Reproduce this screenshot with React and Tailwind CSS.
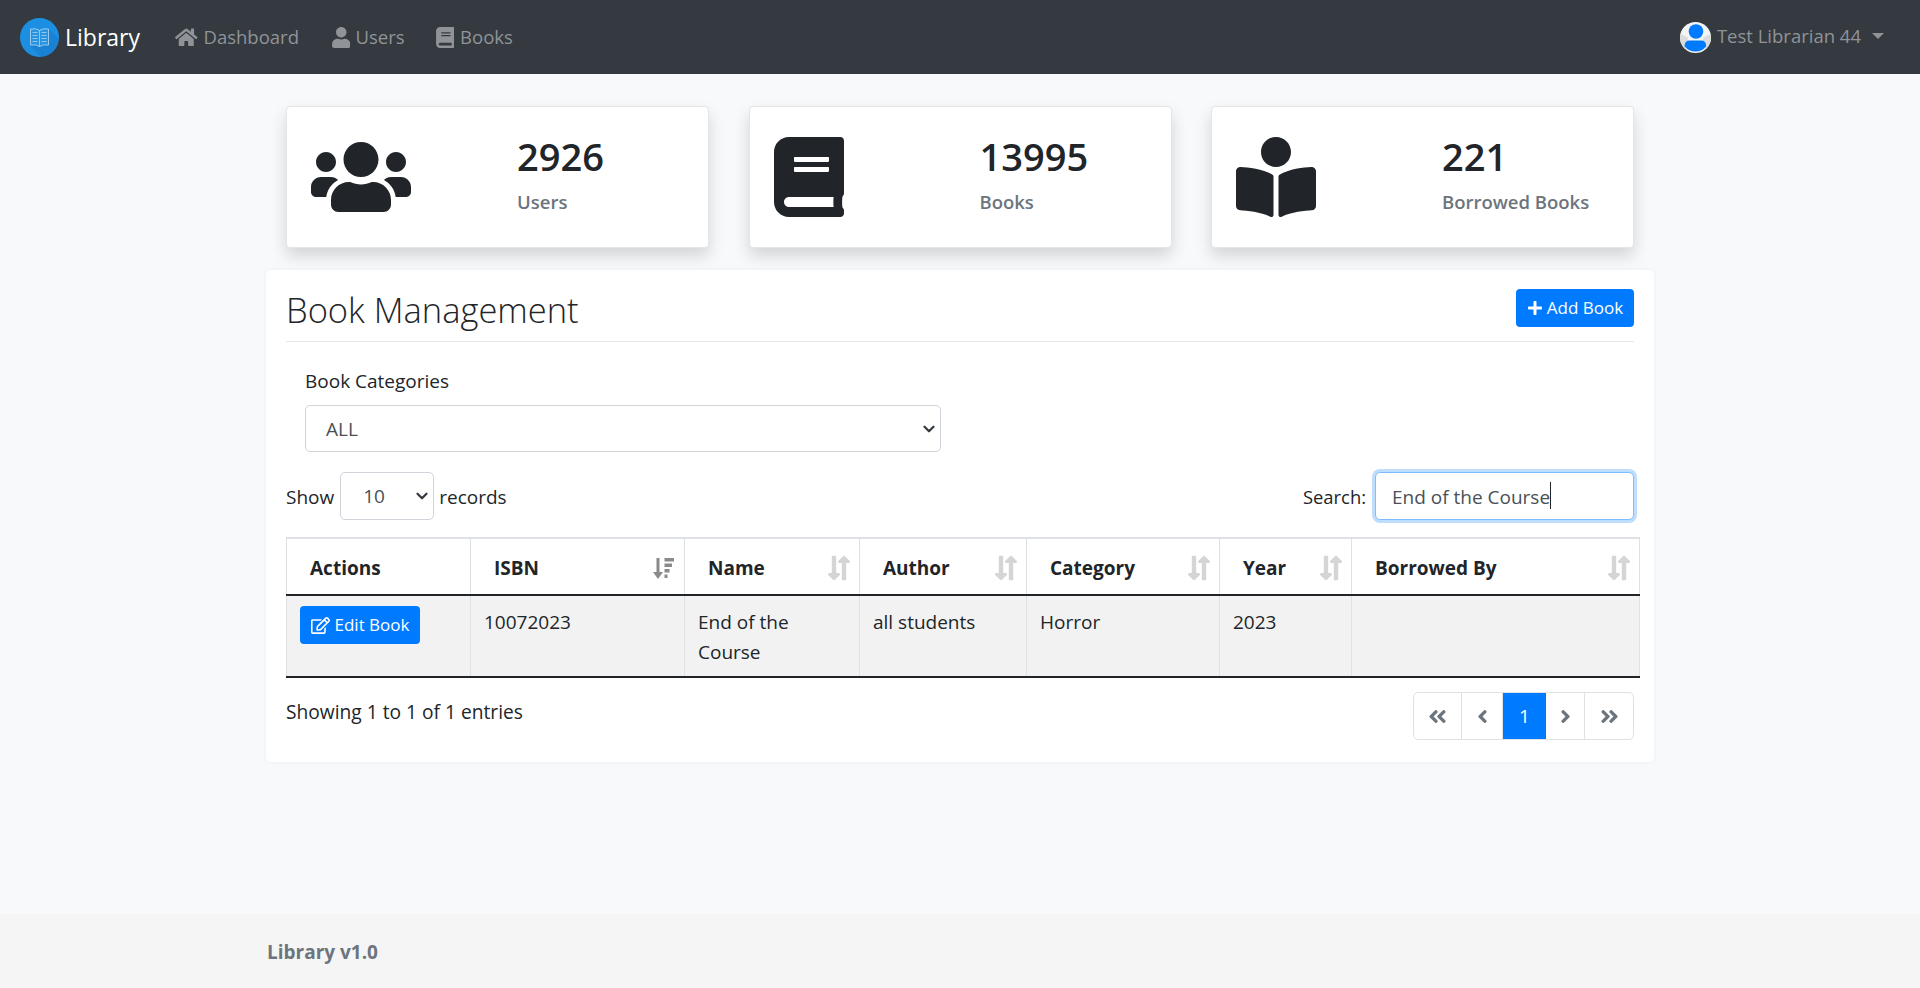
import React from 'react';
import {
    FaHome, FaUser, FaBook, FaUsers, FaBookReader, FaPlus, FaRegEdit,
    FaLongArrowAltDown, FaLongArrowAltUp, FaAngleDoubleLeft, FaAngleLeft, FaAngleRight, FaAngleDoubleRight,
} from 'react-icons/fa';
import { ChevronDown } from 'lucide-react';

const font = { fontFamily: '"Open Sans", "Noto Sans", sans-serif' };

const LogoMark = () => (
    <svg width="39" height="39" viewBox="0 0 39 39">
        <defs>
            <clipPath id="logo-clip"><circle cx="19.5" cy="19.5" r="19.5" /></clipPath>
        </defs>
        <circle cx="19.5" cy="19.5" r="19.5" fill="#1c8fe3" />
        <g clipPath="url(#logo-clip)">
            <path d="M10 28 L29 11 L40 22 L40 40 L22 40 Z" fill="#1673c0" opacity="0.45" />
        </g>
        <path d="M10.5 11 Q16 10 19.5 12.5 Q23 10 28.5 11 V27 Q23 26 19.5 28.5 Q16 26 10.5 27 Z" fill="#2a93e0" stroke="#a6d4f3" strokeWidth="0.9" />
        <path d="M19.5 12.5 V28.5 M12.5 14.5 H17.5 M12.5 17.5 H17.5 M12.5 20.5 H17.5 M12.5 23.5 H17.5 M21.5 14.5 H26.5 M21.5 17.5 H26.5 M21.5 20.5 H26.5 M21.5 23.5 H26.5" stroke="#a6d4f3" strokeWidth="0.8" fill="none" />
    </svg>
);

const AvatarMark = () => (
    <svg width="31" height="31" viewBox="0 0 32 32">
        <defs>
            <clipPath id="avatar-clip"><circle cx="16" cy="16" r="16" /></clipPath>
        </defs>
        <circle cx="16" cy="16" r="16" fill="#f4f4f4" />
        <path d="M0 12 L8 16 L8 24 L4 30 L0 30 Z M32 12 L24 16 L24 24 L28 30 L32 30 Z" fill="#dcdcdc" clipPath="url(#avatar-clip)" />
        <circle cx="16.5" cy="9.8" r="7.5" fill="#007bff" />
        <path d="M4.7 25 Q4.7 19 10 19 H22 Q27 19 27 25 Q23 30.5 16 30.5 Q9 30.5 4.7 25 Z" fill="#007bff" />
    </svg>
);

// thicker than the FA glyph, bars get shorter going down
const SortAmountIcon = () => (
    <svg width="21" height="21" viewBox="0 0 21 21" fill="#8a8a8a">
        <path d="M3.5 0 H6.5 V14 H10 L5 21 L0 14 H3.5 Z" />
        <path d="M11.5 0 H21 V3.5 H11.5 Z M11.5 5.5 H19 V9 H11.5 Z M11.5 11 H16.5 V14.5 H11.5 Z M11.5 16.5 H14.5 V20 H11.5 Z" />
    </svg>
);

const NavItem = ({ icon: Icon, label, iconSize, iconClass, className }) => (
    <a className={`flex items-center text-[#909397] ${className}`}>
        <Icon size={iconSize} className={iconClass} />
        <span>{label}</span>
    </a>
);

const StatCard = ({ icon: Icon, iconSize, iconClass, value, label }) => (
    <div className="w-[423px] h-[142px] bg-white border border-[#e3e5e7] rounded-[4px] shadow-[0_8px_16px_rgba(0,0,0,0.15)] flex items-center">
        <div className="w-[230px] pl-[24px] shrink-0 text-[#212529]">
            <Icon size={iconSize} className={iconClass} />
        </div>
        <div className="-mt-[8px]">
            <p className="text-[38px] font-semibold text-[#212529] leading-[48px]">{value}</p>
            <p className="text-[18.5px] font-semibold text-[#6c757d] leading-[27px] mt-[8px]">{label}</p>
        </div>
    </div>
);

const SortIcon = ({ active }) => active ? (
    <SortAmountIcon />
) : (
    <span className="flex items-center h-[21px] -mr-[2px] text-[#d5d5d5]">
        <FaLongArrowAltDown size={28} className="w-[14px]" />
        <FaLongArrowAltUp size={28} className="w-[14px] -ml-[4px]" />
    </span>
);

const columns = [
    { label: 'Actions', width: 'w-[184px]', noSort: true },
    { label: 'ISBN', width: 'w-[214px]', active: true },
    { label: 'Name', width: 'w-[175px]' },
    { label: 'Author', width: 'w-[167px]' },
    { label: 'Category', width: 'w-[193px]' },
    { label: 'Year', width: 'w-[132px]' },
    { label: 'Borrowed By', width: 'w-[288px]' },
];

const pageButtons = [
    { icon: FaAngleDoubleLeft, width: 'w-[48px]' },
    { icon: FaAngleLeft, width: 'w-[41px]' },
    { text: '1', width: 'w-[43px]' },
    { icon: FaAngleRight, width: 'w-[39px]' },
    { icon: FaAngleDoubleRight, width: 'w-[48px]' },
];

const tdClass = "border-r border-[#dee2e6] align-top pt-[11px] px-[13px]";

export default function App() {
    return (
        <div style={font} className="min-h-screen flex flex-col bg-[#f8f9fa] text-[19px] text-[#212529]">
            <nav className="h-[74px] bg-[#343a40] flex items-center justify-between pl-[20px] pr-[36px] text-[18.5px]">
                <div className="flex items-center">
                    <div className="flex items-center gap-[6px] text-white text-[23px] w-[155px]">
                        <LogoMark />
                        <span>Library</span>
                    </div>
                    <div className="flex items-center">
                        <NavItem icon={FaHome} iconSize={22.5} className="gap-[6px]" label="Dashboard" />
                        <NavItem icon={FaUser} iconSize={21} iconClass="w-[18.5px]" className="gap-[5px] ml-[33px]" label="Users" />
                        <NavItem icon={FaBook} iconSize={21} iconClass="w-[18.5px]" className="gap-[6px] ml-[31px]" label="Books" />
                    </div>
                </div>
                <div className="flex items-center text-[#909397]">
                    <AvatarMark />
                    <span className="ml-[6px] -mt-[2px]">Test Librarian 44</span>
                    <span className="ml-[11px] -mt-[2px] border-x-[6px] border-x-transparent border-t-[6px] border-t-[#909397]"></span>
                </div>
            </nav>

            <main className="flex-1 flex flex-col items-center pt-[32px]">
                <div className="flex gap-[39.5px] w-[1348px]">
                    <StatCard icon={FaUsers} iconSize={100} value="2926" label="Users" />
                    <StatCard icon={FaBook} iconSize={80} iconClass="w-[70px]" value="13995" label="Books" />
                    <StatCard icon={FaBookReader} iconSize={80} value="221" label="Borrowed Books" />
                </div>

                <section className="w-[1388px] h-[492px] mt-[22px] bg-white rounded-[5px] shadow-[0_0_4px_rgba(0,0,0,0.05)] px-[20px] pt-[19px]">
                    <div className="flex items-center justify-between h-[53px] border-b border-[#e5e7e9]">
                        <h2 className="text-[34.5px] font-light leading-[44px] -mt-[10px]">Book Management</h2>
                        <button className="h-[38px] w-[118px] -mt-[15px] bg-[#007bff] text-white rounded-[4px] flex items-center justify-center gap-[4px] text-[17px]">
                            <FaPlus size={16} />
                            Add Book
                        </button>
                    </div>

                    <div className="ml-[19px] w-[636px] mt-[26px]">
                        <label className="block leading-[27px]">Book Categories</label>
                        <div className="relative mt-[10px]">
                            <select className="w-full h-[47px] appearance-none bg-white border border-[#ced4da] rounded-[5px] pl-[20px] pt-[2px] text-[#495057]">
                                <option>ALL</option>
                            </select>
                            <ChevronDown size={18} strokeWidth={3} className="absolute right-[3px] top-[15px] text-[#343a40]" />
                        </div>
                    </div>

                    <div className="flex items-center justify-between mt-[20px] h-[48px]">
                        <div className="flex items-center">
                            <span className="pt-[2px]">Show</span>
                            <div className="relative ml-[6px] mr-[5px]">
                                <select className="w-[94px] h-[48px] appearance-none bg-white border border-[#ced4da] rounded-[5px] pl-[22px] text-[#495057]">
                                    <option>10</option>
                                </select>
                                <ChevronDown size={18} strokeWidth={3} className="absolute right-[3px] top-[15px] text-[#343a40]" />
                            </div>
                            <span className="pt-[2px]">records</span>
                        </div>
                        <div className="flex items-center gap-[9px]">
                            <label className="text-[18.4px] pt-[2px]">Search:</label>
                            <div className="relative">
                                <input
                                    defaultValue="End of the Course"
                                    className="block w-[259px] h-[48px] bg-white border border-[#80bdff] rounded-[5px] pl-[16px] pt-[2px] text-[#495057] outline-none shadow-[0_0_0_3px_rgba(0,123,255,0.25)]"
                                />
                                <span className="absolute left-[175px] top-[10px] w-px h-[27px] bg-[#212529]"></span>
                            </div>
                        </div>
                    </div>

                    <table className="mt-[17px] w-[1353px] table-fixed border-collapse border-t-2 border-t-[#dee2e6] border-l border-l-[#dee2e6]">
                        <thead>
                            <tr className="h-[57px] border-b-2 border-b-[#212529]">
                                {columns.map((col) => (
                                    <th key={col.label} className={`${col.width} border-r border-[#dee2e6] pl-[23px] pr-[10px] text-left font-bold`}>
                                        <div className="flex items-center justify-between pt-[3px]">
                                            <span>{col.label}</span>
                                            {!col.noSort && <SortIcon active={col.active} />}
                                        </div>
                                    </th>
                                ))}
                            </tr>
                        </thead>
                        <tbody>
                            <tr className="h-[82px] bg-[#f2f2f2] border-b-2 border-b-[#212529] leading-[30px]">
                                <td className={tdClass}>
                                    <button className="h-[38px] w-[120px] -mt-[1px] bg-[#007bff] text-white rounded-[4px] flex items-center justify-center gap-[5px] text-[17px]">
                                        <FaRegEdit size={19} />
                                        Edit Book
                                    </button>
                                </td>
                                <td className={tdClass}>10072023</td>
                                <td className={tdClass}>End of the Course</td>
                                <td className={tdClass}>all students</td>
                                <td className={tdClass}>Horror</td>
                                <td className={tdClass}>2023</td>
                                <td className={tdClass}></td>
                            </tr>
                        </tbody>
                    </table>

                    <div className="flex justify-between mt-[14px]">
                        <span className="leading-[27px] pt-[6px] text-[19.2px]">Showing 1 to 1 of 1 entries</span>
                        <div className="flex h-[48px] border border-[#dee2e6] rounded-[5px] overflow-hidden">
                            {pageButtons.map((btn, i) => btn.text ? (
                                <span key={i} className={`${btn.width} bg-[#007bff] text-white flex items-center justify-center`}>{btn.text}</span>
                            ) : (
                                <span key={i} className={`${btn.width} flex items-center justify-center text-[#6c757d] border-r border-[#dee2e6] last:border-r-0`}>
                                    <btn.icon size={21} />
                                </span>
                            ))}
                        </div>
                    </div>
                </section>
            </main>

            <footer className="h-[74px] bg-[#f5f5f5] flex items-center pl-[267px] pt-[2px] text-[19px] font-bold text-[#6c757d]">
                Library v1.0
            </footer>
        </div>
    );
}
